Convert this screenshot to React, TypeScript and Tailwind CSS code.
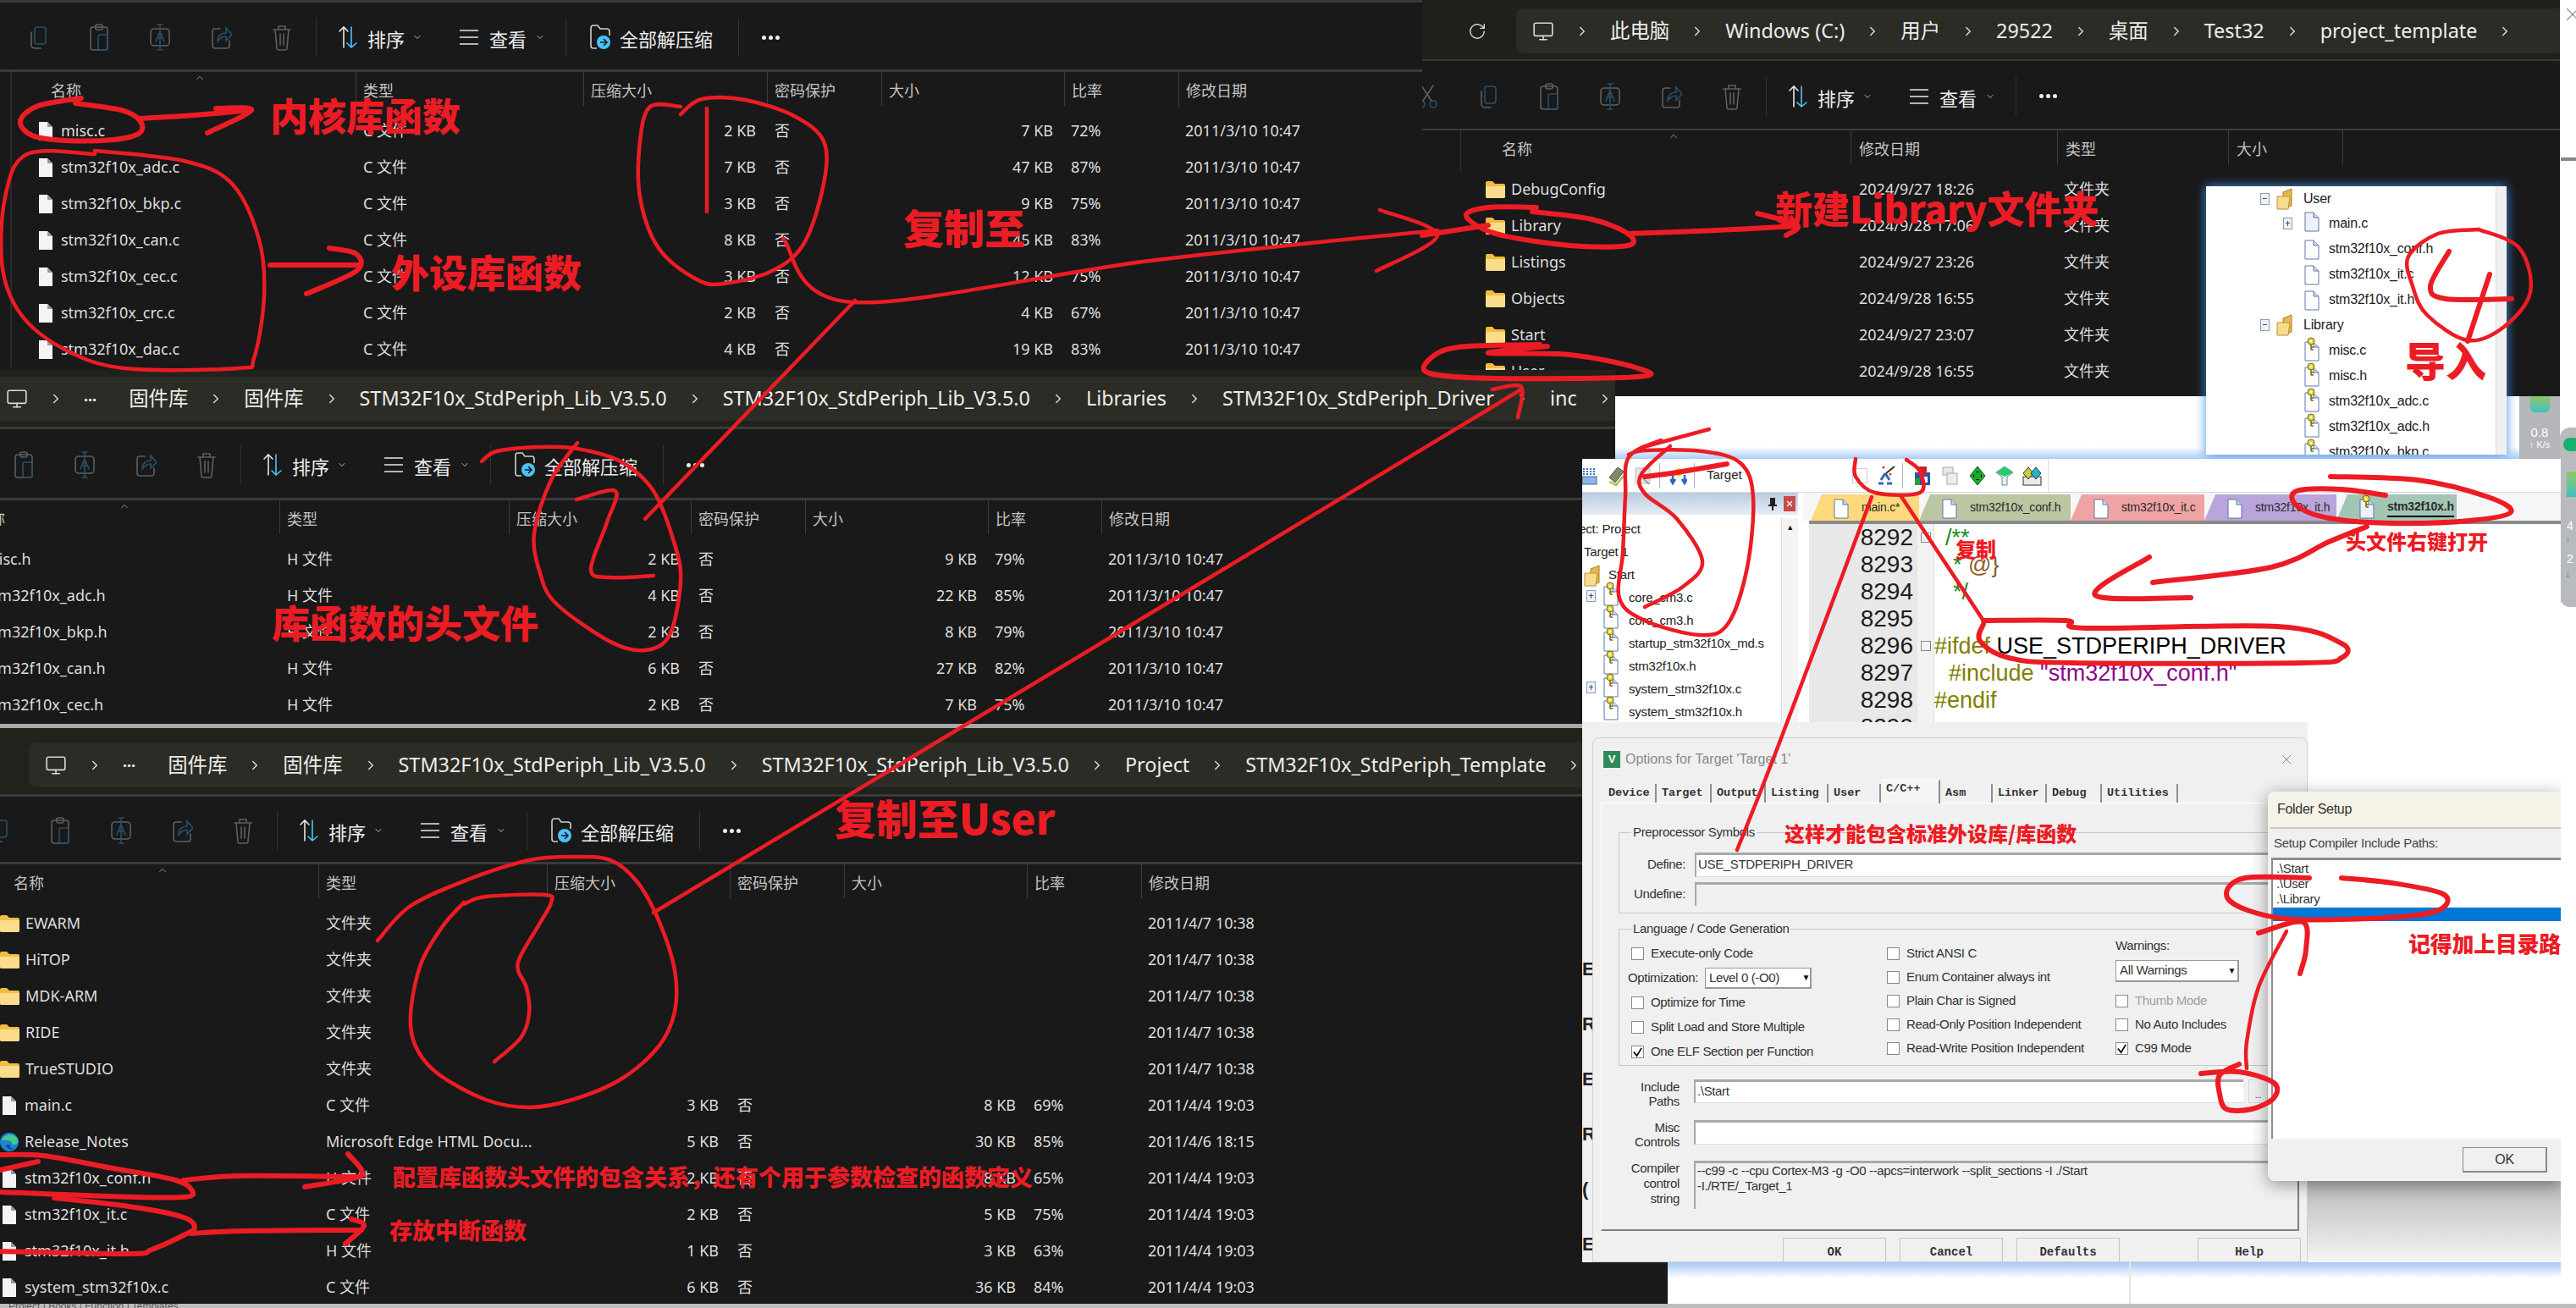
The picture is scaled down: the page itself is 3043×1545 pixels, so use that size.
import React from 'react';
import { ChevronDown, ChevronRight, ChevronUp, Monitor, RotateCw, X } from 'lucide-react';

const SANS = "font-['Noto_Sans','Noto_Sans_CJK_SC',sans-serif]";
const ARIAL = "font-['Liberation_Sans','Noto_Sans_CJK_SC',sans-serif]";
const MONO = "font-['Liberation_Mono',monospace]";
const NOTE = "font-['Noto_Sans_CJK_SC',sans-serif] font-black text-[#ec1c24] leading-none whitespace-nowrap absolute";

type Row = { name: string; icon: 'file' | 'folder' | 'edge'; type: string; zip?: string; pwd?: string; size?: string; ratio?: string; date: string };

const libC: Row[] = [
  ['misc.c', '2', '7', '72'],
  ['stm32f10x_adc.c', '7', '47', '87'],
  ['stm32f10x_bkp.c', '3', '9', '75'],
  ['stm32f10x_can.c', '8', '45', '83'],
  ['stm32f10x_cec.c', '3', '12', '75'],
  ['stm32f10x_crc.c', '2', '4', '67'],
  ['stm32f10x_dac.c', '4', '19', '83'],
].map(([name, z, s, r]) => ({ name, icon: 'file', type: 'C 文件', zip: `${z} KB`, pwd: '否', size: `${s} KB`, ratio: `${r}%`, date: '2011/3/10 10:47' }));

const libH: Row[] = [
  ['misc.h', '2', '9', '79'],
  ['stm32f10x_adc.h', '4', '22', '85'],
  ['stm32f10x_bkp.h', '2', '8', '79'],
  ['stm32f10x_can.h', '6', '27', '82'],
  ['stm32f10x_cec.h', '2', '7', '75'],
].map(([name, z, s, r]) => ({ name, icon: 'file', type: 'H 文件', zip: `${z} KB`, pwd: '否', size: `${s} KB`, ratio: `${r}%`, date: '2011/3/10 10:47' }));

const template: Row[] = [
  ...['EWARM', 'HiTOP', 'MDK-ARM', 'RIDE', 'TrueSTUDIO'].map((name): Row => ({ name, icon: 'folder', type: '文件夹', date: '2011/4/7 10:38' })),
  { name: 'main.c', icon: 'file', type: 'C 文件', zip: '3 KB', pwd: '否', size: '8 KB', ratio: '69%', date: '2011/4/4 19:03' },
  { name: 'Release_Notes', icon: 'edge', type: 'Microsoft Edge HTML Docu...', zip: '5 KB', pwd: '否', size: '30 KB', ratio: '85%', date: '2011/4/6 18:15' },
  { name: 'stm32f10x_conf.h', icon: 'file', type: 'H 文件', zip: '2 KB', pwd: '否', size: '8 KB', ratio: '65%', date: '2011/4/4 19:03' },
  { name: 'stm32f10x_it.c', icon: 'file', type: 'C 文件', zip: '2 KB', pwd: '否', size: '5 KB', ratio: '75%', date: '2011/4/4 19:03' },
  { name: 'stm32f10x_it.h', icon: 'file', type: 'H 文件', zip: '1 KB', pwd: '否', size: '3 KB', ratio: '63%', date: '2011/4/4 19:03' },
  { name: 'system_stm32f10x.c', icon: 'file', type: 'C 文件', zip: '6 KB', pwd: '否', size: '36 KB', ratio: '84%', date: '2011/4/4 19:03' },
];

const projectDirs = [
  ['DebugConfig', '2024/9/27 18:26'],
  ['Library', '2024/9/28 17:06'],
  ['Listings', '2024/9/27 23:26'],
  ['Objects', '2024/9/28 16:55'],
  ['Start', '2024/9/27 23:07'],
  ['User', '2024/9/28 16:55'],
];

function FileIcon() {
  return (
    <svg width="16" height="22" viewBox="0 0 16 22" className="shrink-0">
      <path d="M0 0h10l6 6v16H0z" fill="#f4f4f4" />
      <path d="M10 0v6h6z" fill="#9a9a9a" />
    </svg>
  );
}

function FolderIcon() {
  return (
    <svg width="23" height="20" viewBox="0 0 23 20" className="shrink-0">
      <path d="M0 2a2 2 0 0 1 2-2h6l3 3h10a2 2 0 0 1 2 2v13a2 2 0 0 1-2 2H2a2 2 0 0 1-2-2z" fill="#f0bd3f" />
      <path d="M0 6h23v12a2 2 0 0 1-2 2H2a2 2 0 0 1-2-2z" fill="#fbdc8a" />
    </svg>
  );
}

function EdgeIcon() {
  return (
    <svg width="22" height="22" viewBox="0 0 22 22" className="shrink-0">
      <circle cx="11" cy="11" r="11" fill="#1b83d4" />
      <path d="M2 9C4 2 14 0 19 5c3 3 3 8-1 9-3 1-5-1-4-3-4-3-9-2-12-2z" fill="#46c98c" />
      <path d="M7 14c0 4 5 7 10 5-5 0-6-3-5-5z" fill="#0d4d9b" />
    </svg>
  );
}

function Icon2({ children }: { children: React.ReactNode }) {
  return (
    <div className="flex h-[46px] w-[72px] items-center justify-center">
      <svg width="26" height="34" viewBox="0 0 26 34" fill="none" strokeWidth="1.6" strokeLinecap="round">
        {children}
      </svg>
    </div>
  );
}

function ActionIcons({ cut }: { cut?: boolean }) {
  const g = '#5f5f5f';
  const b = '#26506b';
  return (
    <>
      {cut && (
        <Icon2>
          <circle cx="6" cy="26" r="4" stroke={b} />
          <circle cx="20" cy="26" r="4" stroke={b} />
          <path d="M8 22 20 4M18 22 6 4" stroke={g} />
        </Icon2>
      )}
      <Icon2>
        <rect x="9" y="5" width="13" height="20" rx="3" stroke={b} />
        <path d="M5 11v15a4 4 0 0 0 4 4h7" stroke={g} />
      </Icon2>
      <Icon2>
        <rect x="3" y="5" width="20" height="27" rx="3" stroke={g} />
        <rect x="9" y="2" width="8" height="6" rx="2" stroke={g} />
        <rect x="12" y="14" width="11" height="18" rx="2" stroke={b} />
      </Icon2>
      <Icon2>
        <rect x="2" y="7" width="22" height="20" rx="4" stroke={g} />
        <path d="M13 2v30M10 2h6M10 32h6" stroke={b} />
        <path d="M8 22l5-12 5 12M10 18h6" stroke={b} />
      </Icon2>
      <Icon2>
        <path d="M12 7H6a3 3 0 0 0-3 3v17a3 3 0 0 0 3 3h14a3 3 0 0 0 3-3v-6" stroke={g} />
        <path d="M9 22c0-7 5-10 10-10V6l7 8-7 7v-5c-4 0-7 2-10 6z" stroke={b} />
      </Icon2>
      <Icon2>
        <path d="M3 8h20M9 8V4h8v4M5 8l2 22a2 2 0 0 0 2 2h8a2 2 0 0 0 2-2l2-22M11 13v13M15 13v13" stroke={g} />
      </Icon2>
    </>
  );
}

function Toolbar({ offset, zip, cut }: { offset: string; zip?: boolean; cut?: boolean }) {
  return (
    <div className={`flex h-full items-center text-[22px] text-[#ededed] ${SANS} ${offset}`}>
      <ActionIcons cut={cut} />
      <div className="ml-[4px] h-[46px] w-px bg-[#333333]" />
      <div className="ml-[26px] flex items-center">
        <svg width="22" height="30" viewBox="0 0 22 30" fill="none" strokeWidth="1.6" strokeLinecap="round">
          <path d="M6 27V3M1 8l5-5 5 5" stroke="#e6e6e6" />
          <path d="M15 3v24M10 22l5 5 6-5" stroke="#4cc2ff" />
        </svg>
        <span className="ml-[12px] mt-[5px] w-[45px]">排序</span>
        <ChevronDown size={12} className="ml-[8px] text-[#bdbdbd]" />
      </div>
      <div className="ml-[44px] flex items-center">
        <svg width="22" height="20" viewBox="0 0 22 20" stroke="#e6e6e6" strokeWidth="1.6">
          <path d="M0 2h22M0 10h22M0 18h22" />
        </svg>
        <span className="ml-[13px] mt-[5px] w-[45px]">查看</span>
        <ChevronDown size={12} className="ml-[9px] text-[#bdbdbd]" />
      </div>
      <div className="ml-[24px] h-[46px] w-px bg-[#333333]" />
      {zip && (
        <>
          <div className="ml-[28px] flex items-center">
            <svg width="25" height="32" viewBox="0 0 25 32" fill="none" strokeWidth="1.6">
              <path d="M8 29H4a3 3 0 0 1-3-3V5a3 3 0 0 1 3-3h5l3 4h8a3 3 0 0 1 3 3v5" stroke="#cfcfcf" />
              <circle cx="16" cy="22" r="8" fill="#4cc2ff" />
              <path d="M12 22h7M16 18l4 4-4 4" stroke="#191919" />
            </svg>
            <span className="ml-[10px] mt-[5px] w-[112px] whitespace-nowrap">全部解压缩</span>
          </div>
          <div className="ml-[28px] h-[46px] w-px bg-[#333333]" />
        </>
      )}
      <div className="ml-[27px] flex gap-[3px]">
        <span className="h-[5px] w-[5px] rounded-full bg-[#eeeeee]" />
        <span className="h-[5px] w-[5px] rounded-full bg-[#eeeeee]" />
        <span className="h-[5px] w-[5px] rounded-full bg-[#eeeeee]" />
      </div>
    </div>
  );
}

function Crumbs({ items, more }: { items: string[]; more?: boolean }) {
  return (
    <div className={`flex h-full items-center gap-[24px] whitespace-nowrap text-[23.4px] text-[#ececec] ${SANS}`}>
      <Monitor size={26} strokeWidth={1.5} className="shrink-0 text-[#d8d8d8]" />
      <ChevronRight size={18} className="shrink-0 text-[#d8d8d8]" />
      {more && <span className="mb-[8px] mr-[14px] text-[18px] font-bold">...</span>}
      {items.map((c, i) => (
        <React.Fragment key={i}>
          <span>{c}</span>
          <ChevronRight size={18} className="shrink-0 text-[#d8d8d8]" />
        </React.Fragment>
      ))}
    </div>
  );
}

function FileRows({ rows, grid, nameOffset }: { rows: Row[]; grid: string; nameOffset: string }) {
  return (
    <div className={`text-[18px] text-[#dedede] ${SANS}`}>
      {rows.map((r) => (
        <div key={r.name} className={`grid h-[43px] items-center ${grid}`}>
          <div className={`flex min-w-0 items-center gap-[10px] whitespace-nowrap ${nameOffset}`}>
            {r.icon === 'file' && <FileIcon />}
            {r.icon === 'folder' && <span className="ml-[-3px] mr-[-3px]"><FolderIcon /></span>}
            {r.icon === 'edge' && <span className="ml-[-3px] mr-[-3px]"><EdgeIcon /></span>}
            <span>{r.name}</span>
          </div>
          <div className="whitespace-nowrap pl-[9px]">{r.type}</div>
          <div className="pr-[13px] text-right">{r.zip}</div>
          <div className="pl-[9px]">{r.pwd}</div>
          <div className="pr-[13px] text-right">{r.size}</div>
          <div className="pl-[8px]">{r.ratio}</div>
          <div className="whitespace-nowrap pl-[8px]">{r.date}</div>
        </div>
      ))}
    </div>
  );
}

function HeaderRow({ grid, caret, first }: { grid: string; caret: string; first: string }) {
  const labels = ['类型', '压缩大小', '密码保护', '大小', '比率', '修改日期'];
  return (
    <div className={`relative grid h-[48px] text-[18px] text-[#c4c4c4] ${SANS} ${grid}`}>
      <ChevronUp size={14} strokeWidth={1.5} className={`absolute top-[0px] text-[#9a9a9a] ${caret}`} />
      <div className={`whitespace-nowrap pt-[9px] ${first}`}>名称</div>
      {labels.map((l) => (
        <div key={l} className="h-[40px] whitespace-nowrap border-l border-[#3d3d3d] pl-[8px] pt-[9px]">
          {l}
        </div>
      ))}
    </div>
  );
}

function Glyph({ children, w = 20 }: { children: React.ReactNode; w?: number }) {
  return (
    <svg width={w} height="26" viewBox={`0 0 ${w} 26`} className="shrink-0">
      {children}
    </svg>
  );
}

function PageIcon({ keyed, plain }: { keyed?: boolean; plain?: boolean }) {
  return (
    <span className="relative inline-block h-[26px] w-[20px] shrink-0">
      <svg width="18" height="24" viewBox="0 0 18 24" className="absolute left-[1px] top-[2px]">
        <path d="M1 1h10l6 6v16H1z" fill={plain ? '#ffffff' : '#eef1f8'} stroke="#5c76a8" />
        <path d="M11 1v6h6" fill="#cfd8ea" stroke="#5c76a8" />
      </svg>
      {keyed && (
        <svg width="12" height="16" viewBox="0 0 12 16" className="absolute left-[3px] top-[-3px]">
          <circle cx="6" cy="5" r="4" fill="#e8d63a" stroke="#6f6a10" />
          <circle cx="6" cy="5" r="1.3" fill="#ffffff" />
          <path d="M6 9v6M6 12h3M6 15h3" stroke="#6f6a10" strokeWidth="1.5" />
        </svg>
      )}
    </span>
  );
}

function YellowFolder() {
  return (
    <svg width="22" height="26" viewBox="0 0 22 26" className="shrink-0">
      <path d="M8 5l10-4v20L8 25z" fill="#e7b94d" stroke="#a98023" />
      <path d="M1 10h15l-2 15H1z" fill="#f8dc8e" stroke="#b98f30" />
    </svg>
  );
}

function TreeBox({ plus }: { plus?: boolean }) {
  return (
    <span className="relative inline-block h-[14px] w-[11px] shrink-0 border border-[#8d9bb3] bg-[#eef1f6]">
      <span className="absolute left-[2px] top-[5px] h-px w-[5px] bg-[#3f4f78]" />
      {plus && <span className="absolute left-[4px] top-[3px] h-[6px] w-px bg-[#3f4f78]" />}
    </span>
  );
}

function UserTree() {
  const fileRow = 'flex h-[30px] items-center pl-[115px]';
  return (
    <div className={`absolute left-[2606px] top-[220px] z-20 flex h-[317px] w-[355px] overflow-hidden bg-white text-[16px] tracking-[-0.2px] text-[#222222] shadow-[0_0_12px_#3f8ee8] ${ARIAL}`}>
      <div className="flex-1 pt-[0px]">
        <div className="flex h-[29px] items-center pl-[64px]">
          <TreeBox /><span className="ml-[8px]"><YellowFolder /></span><span className="ml-[10px]">User</span>
        </div>
        <div className="flex h-[30px] items-center pl-[91px]">
          <TreeBox plus /><span className="ml-[13px]"><PageIcon /></span><span className="ml-[10px]">main.c</span>
        </div>
        {['stm32f10x_conf.h', 'stm32f10x_it.c', 'stm32f10x_it.h'].map((n) => (
          <div key={n} className={fileRow}><PageIcon plain /><span className="ml-[10px]">{n}</span></div>
        ))}
        <div className="flex h-[30px] items-center pl-[64px]">
          <TreeBox /><span className="ml-[8px]"><YellowFolder /></span><span className="ml-[10px]">Library</span>
        </div>
        {['misc.c', 'misc.h', 'stm32f10x_adc.c', 'stm32f10x_adc.h', 'stm32f10x_bkp.c'].map((n) => (
          <div key={n} className={fileRow}><PageIcon keyed plain /><span className="ml-[10px]">{n}</span></div>
        ))}
      </div>
      <div className="w-[13px] border-l border-[#dddddd] bg-[#f0f0f0]" />
    </div>
  );
}

function KeilToolbar() {
  return (
    <div className="flex h-[40px] border-b border-[#d8d8d8] bg-white">
      <div className={`flex w-[551px] items-center border-r border-[#d8d8d8] text-[15px] text-[#222222] ${ARIAL}`}>
        <Glyph w={18}>
          <rect x="0" y="14" width="17" height="9" fill="#8fb6e8" stroke="#40689f" />
          <path d="M2 4v8M6 4v8M10 4v8M14 4v8" stroke="#3d74c2" strokeWidth="2" strokeDasharray="2 1" />
        </Glyph>
        <span className="ml-[12px]">
          <Glyph>
            <path d="M2 15 12 3l7 5-10 13z" fill="#7f8a6d" stroke="#50543f" />
            <path d="M2 20l8 4 9-11" fill="none" stroke="#a8c24b" strokeWidth="2.5" />
          </Glyph>
        </span>
        <span className="ml-[12px]">
          <Glyph>
            <rect x="1" y="4" width="17" height="18" fill="#e4e4e4" stroke="#bdbdbd" />
            <path d="M10 16l7 7" stroke="#a5a5a5" strokeWidth="2" />
          </Glyph>
        </span>
        <span className="ml-[9px] h-[30px] w-px bg-[#b5b5b5]" />
        <span className="ml-[12px]">
          <Glyph>
            <circle cx="10" cy="9" r="5" fill="#e5dc2e" />
            <path d="M3 12v8M0 17l3 5 3-5M17 12v8M14 17l3 5 3-5" stroke="#2d66c0" strokeWidth="2.5" fill="none" />
          </Glyph>
        </span>
        <span className="ml-[8px] h-[30px] w-px bg-[#b5b5b5]" />
        <span className="ml-[14px]">Target</span>
        <span className="ml-[130px] h-[18px] w-[18px] border border-[#cccccc]" />
        <span className="ml-[10px]">
          <Glyph w={23}>
            <path d="M3 22h6M13 22h6M11 10 6 18M11 10l5 8" stroke="#3268b8" strokeWidth="3" fill="none" />
            <path d="M12 10 22 2" stroke="#333333" strokeWidth="2" />
            <circle cx="17" cy="11" r="1.5" fill="#d33" />
            <circle cx="9" cy="3" r="1.5" fill="#d33" />
          </Glyph>
        </span>
        <span className="ml-[8px] h-[30px] w-px bg-[#b5b5b5]" />
        <span className="ml-[13px]">
          <Glyph>
            <rect x="1" y="9" width="18" height="15" fill="#2557a8" />
            <rect x="5" y="2" width="10" height="10" fill="#c6242a" />
            <rect x="9" y="14" width="7" height="7" fill="#ffffff" />
            <rect x="1" y="16" width="6" height="8" fill="#2d9a43" />
          </Glyph>
        </span>
        <span className="ml-[13px]">
          <Glyph>
            <rect x="1" y="3" width="12" height="9" fill="#e8e8e8" stroke="#a8a8a8" />
            <rect x="6" y="10" width="12" height="13" fill="#ededed" stroke="#a8a8a8" />
          </Glyph>
        </span>
        <span className="ml-[12px]">
          <Glyph>
            <path d="M10 2l9 11-9 11L1 13z" fill="#19a82f" stroke="#0a5a17" />
            <path d="M10 8v1M10 17v1M5 13h1M14 13h1" stroke="#000000" strokeWidth="3" />
          </Glyph>
        </span>
        <span className="ml-[11px]">
          <Glyph w={22}>
            <path d="M1 9 11 2l10 7-7 5v10h-6V14z" fill="#dfeff5" stroke="#6a8a92" />
            <path d="M1 9 11 2l10 7-10 5z" fill="#2fc86b" />
          </Glyph>
        </span>
        <span className="ml-[10px]">
          <Glyph w={23}>
            <rect x="1" y="14" width="21" height="10" fill="#e9e9e9" stroke="#333333" />
            <path d="M7 3l6 7-6 7-6-7z" fill="#c8cf34" stroke="#333333" />
            <path d="M16 3l6 7-6 7-6-7z" fill="#22b6c8" stroke="#333333" />
          </Glyph>
        </span>
      </div>
    </div>
  );
}

function ProjectPane() {
  const files: [string, boolean][] = [
    ['core_cm3.c', true],
    ['core_cm3.h', false],
    ['startup_stm32f10x_md.s', false],
    ['stm32f10x.h', false],
    ['system_stm32f10x.c', true],
    ['system_stm32f10x.h', false],
  ];
  return (
    <div className={`flex w-[255px] shrink-0 flex-col bg-white text-[15px] tracking-[-0.2px] text-[#222222] ${ARIAL}`}>
      <div className="flex h-[26px] shrink-0 items-center justify-end gap-[8px] bg-gradient-to-b from-[#b9cce0] to-[#e6edf5] pr-[3px]">
        <svg width="10" height="16" viewBox="0 0 10 16">
          <path d="M2 1h6v8h2v2H6v5H4v-5H0V9h2z" fill="#222222" />
        </svg>
        <span className="flex h-[18px] w-[14px] items-center justify-center bg-[#c84a4a]"><X size={10} strokeWidth={3} className="text-white" /></span>
      </div>
      <div className="flex min-h-0 flex-1 pt-[4px]">
        <div className="min-w-0 flex-1 overflow-hidden">
          <div className="ml-[-7px] flex h-[27px] items-center whitespace-nowrap">ject: Project</div>
          <div className="ml-[2px] flex h-[27px] items-center whitespace-nowrap">Target 1</div>
          <div className="ml-[2px] flex h-[27px] items-center whitespace-nowrap">
            <YellowFolder /><span className="ml-[7px]">Start</span>
          </div>
          {files.map(([n, plus]) => (
            <div key={n} className="flex h-[27px] items-center whitespace-nowrap">
              <span className={`ml-[5px] w-[11px] ${plus ? '' : 'invisible'}`}><TreeBox plus /></span>
              <span className="ml-[8px]"><PageIcon keyed plain /></span>
              <span className="ml-[11px]">{n}</span>
            </div>
          ))}
        </div>
        <div className="flex w-[20px] flex-col items-center border-l border-[#dcdcdc] bg-[#f3f3f3] text-[9px] leading-[22px] text-[#111111]">▲</div>
      </div>
    </div>
  );
}

function EditorTabs() {
  const tabs = [
    { n: 'main.c*', w: 'w-[128px]', bg: 'bg-[#ffd97e]' },
    { n: 'stm32f10x_conf.h', w: 'w-[179px]', bg: 'bg-[#bac7a2]' },
    { n: 'stm32f10x_it.c', w: 'w-[158px]', bg: 'bg-[#efa4a4]' },
    { n: 'stm32f10x_it.h', w: 'w-[156px]', bg: 'bg-[#baa4dc]' },
    { n: 'stm32f10x.h', w: 'w-[142px]', bg: 'bg-[#a2c5b6]', active: true },
  ];
  return (
    <div className={`flex h-[33px] shrink-0 items-end bg-[#f6f6f6] pl-[9px] text-[14px] tracking-[-0.2px] text-[#2b2b2b] ${ARIAL}`}>
      {tabs.map((t) => (
        <div key={t.n} className={`flex h-[31px] items-center pl-[26px] [clip-path:polygon(13px_0,100%_0,100%_100%,0_100%)] ${t.w} ${t.bg}`}>
          <PageIcon plain={!t.active} keyed={t.active} />
          <span className={`ml-[14px] whitespace-nowrap ${t.active ? 'border-b-2 border-black font-bold' : ''}`}>{t.n}</span>
        </div>
      ))}
    </div>
  );
}

function CodeArea() {
  const lines: [string, React.ReactNode][] = [
    ['8292', <span className="ml-[13px] text-[#1a8a2c]">/**</span>],
    ['8293', <span className="ml-[22px] text-[#8b5a2b]"><span className="text-[#1a8a2c]">*</span> @{'}'}</span>],
    ['8294', <span className="ml-[22px] text-[#1a8a2c]">*/</span>],
    ['8295', null],
    ['8296', <span><span className="text-[#808000]">#ifdef</span> <span className="text-black">USE_STDPERIPH_DRIVER</span></span>],
    ['8297', <span className="ml-[17px]"><span className="text-[#808000]">#include</span> <span className="text-[#8b0a8b]">"stm32f10x_conf.h"</span></span>],
    ['8298', <span className="text-[#808000]">#endif</span>],
    ['8299', null],
  ];
  return (
    <div className={`ml-[7px] flex-1 overflow-hidden border-t-[4px] border-[#8a8a8a] bg-white text-[27px] leading-[32px] ${ARIAL}`}>
      {lines.map(([num, code], i) => (
        <div key={num} className="flex h-[32px] items-center whitespace-nowrap">
          <div className="w-[128px] shrink-0 bg-[#e8e8e8] pr-[5px] text-right text-[28px] text-[#1c1c1c]">{num}</div>
          <div className="flex w-[20px] shrink-0 justify-center self-stretch border-r border-[#dddddd] bg-[#f2f2f2] pt-[10px]">
            {(i === 0 || i === 4) && <span className="h-[12px] w-[12px] border border-[#888888]" />}
          </div>
          {code}
        </div>
      ))}
    </div>
  );
}

function Check({ label, checked, disabled, row }: { label: string; checked?: boolean; disabled?: boolean; row: string }) {
  return (
    <div className={`flex items-center whitespace-nowrap ${row}`}>
      <span className="relative h-[15px] w-[15px] shrink-0 border border-[#8a8a8a] bg-white">
        {checked && (
          <svg viewBox="0 0 14 14" className="absolute inset-0">
            <path d="M2 7l4 5 6-10" fill="none" stroke="#111111" strokeWidth="2" />
          </svg>
        )}
      </span>
      <span className={`ml-[8px] ${disabled ? 'text-[#a0a0a0]' : ''}`}>{label}</span>
    </div>
  );
}

function OptionsDialog() {
  const tabs = [
    ['Device', 'w-[63px]'],
    ['Target', 'w-[65px]'],
    ['Output', 'w-[64px]'],
    ['Listing', 'w-[74px]'],
    ['User', 'w-[62px]'],
    ['C/C++', 'w-[70px]'],
    ['Asm', 'w-[62px]'],
    ['Linker', 'w-[64px]'],
    ['Debug', 'w-[65px]'],
    ['Utilities', 'w-[90px]'],
  ];
  const inset = 'border-t-[3px] border-l-2 border-b border-[#a8a8a8] border-b-[#dddddd] bg-white';
  return (
    <div className={`absolute left-[12px] top-[329px] h-[620px] w-[845px] rounded-t-[8px] border border-[#cfcfcf] bg-[#f0f0f0] text-[15px] tracking-[-0.35px] text-[#333333] ${ARIAL}`}>
      <div className="flex h-[49px] items-center pl-[12px] pr-[14px]">
        <span className="flex h-[20px] w-[20px] items-center justify-center bg-[#2e8b57] text-[13px] font-bold leading-none text-white">V</span>
        <span className="ml-[6px] flex-1 text-[16px] tracking-normal text-[#8a8a8a]">Options for Target 'Target 1'</span>
        <X size={20} strokeWidth={1} className="text-[#777777]" />
      </div>
      <div className={`flex h-[27px] items-end pl-[12px] text-[13.5px] font-bold tracking-normal text-[#333333] ${MONO}`}>
        {tabs.map(([t, w]) => (
          <div key={t} className={`flex h-[22px] items-center border-r-2 border-[#8f8f8f] pl-[6px] ${w} ${t === 'C/C++' ? 'mb-[-1px] h-[28px] items-start border-t border-t-white bg-[#f5f5f5]' : ''}`}>
            {t}
          </div>
        ))}
      </div>
      <div className="mx-[9px] h-[506px] border-b-2 border-r-2 border-t border-l border-white border-b-[#808080] border-r-[#808080] pt-[34px]">
        {/* preprocessor group */}
        <div className="relative ml-[20px] h-[96px] w-[794px] border-l border-t border-b border-[#c8c8c8] pt-[23px]">
          <span className="absolute left-[14px] top-[-11px] bg-[#f0f0f0] px-[2px] leading-[20px]">Preprocessor Symbols</span>
          <div className="flex items-center">
            <span className="w-[78px] text-right">Define:</span>
            <div className={`ml-[11px] h-[29px] flex-1 pl-[2px] text-[15px] leading-[22px] ${inset}`}>USE_STDPERIPH_DRIVER</div>
          </div>
          <div className="mt-[6px] flex items-center">
            <span className="w-[78px] text-right">Undefine:</span>
            <div className="ml-[11px] h-[28px] flex-1 border-l-2 border-t-[3px] border-[#a8a8a8] bg-[#f0f0f0]" />
          </div>
        </div>
        {/* code generation group */}
        <div className="relative ml-[20px] mt-[18px] flex h-[162px] w-[794px] border-l border-t border-b border-[#c8c8c8] pl-[14px] pt-[14px]">
          <span className="absolute left-[14px] top-[-11px] bg-[#f0f0f0] px-[2px] leading-[20px]">Language / Code Generation</span>
          <div className="w-[302px]">
            <Check row="h-[29px]" label="Execute-only Code" />
            <div className="ml-[-4px] flex h-[29px] items-center">
              <span>Optimization:</span>
              <div className="ml-[8px] flex h-[25px] w-[126px] items-center justify-between border-b-2 border-l border-r-2 border-t border-[#9a9a9a] bg-white pl-[4px]">
                Level 0 (-O0)
                <span className="text-[10px] leading-none text-[#111111]">▼</span>
              </div>
            </div>
            <Check row="h-[29px]" label="Optimize for Time" />
            <Check row="h-[29px]" label="Split Load and Store Multiple" />
            <Check row="h-[29px]" label="One ELF Section per Function" checked />
          </div>
          <div className="w-[270px]">
            <Check row="h-[28px]" label="Strict ANSI C" />
            <Check row="h-[28px]" label="Enum Container always int" />
            <Check row="h-[28px]" label="Plain Char is Signed" />
            <Check row="h-[28px]" label="Read-Only Position Independent" />
            <Check row="h-[28px]" label="Read-Write Position Independent" />
          </div>
          <div className="mt-[-6px] w-[146px]">
            <div className="h-[22px] leading-[22px]">Warnings:</div>
            <div className="mb-[8px] mt-[6px] flex h-[26px] items-center justify-between border-b-2 border-l border-r-2 border-t border-[#9a9a9a] bg-white pl-[4px]">
              All Warnings
              <span className="mr-[2px] text-[10px] leading-none text-[#111111]">▼</span>
            </div>
            <Check row="h-[28px]" label="Thumb Mode" disabled />
            <Check row="h-[28px]" label="No Auto Includes" />
            <Check row="h-[28px]" label="C99 Mode" checked />
          </div>
        </div>
        {/* paths */}
        <div className="mt-[16px] flex">
          <div className="w-[92px] text-right leading-[17px]">Include<br />Paths</div>
          <div className={`ml-[17px] h-[28px] w-[649px] pl-[2px] leading-[22px] ${inset}`}>.\Start</div>
          <div className="ml-[6px] flex h-[28px] w-[23px] items-end justify-center border border-[#d5d5d5] text-[10px] leading-[16px]">...</div>
        </div>
        <div className="mt-[14px] flex">
          <div className="w-[92px] text-right leading-[17px]">Misc<br />Controls</div>
          <div className={`ml-[17px] h-[29px] flex-1 ${inset}`} />
        </div>
        <div className="mt-[14px] flex">
          <div className="w-[92px] text-right leading-[18px]">Compiler<br />control<br />string</div>
          <div className="ml-[17px] h-[57px] w-[678px] border-l-2 border-t-[3px] border-[#a8a8a8] bg-[#f0f0f0] pl-[2px] leading-[18px]">
            --c99 -c --cpu Cortex-M3 -g -O0 --apcs=interwork --split_sections -I ./Start<br />-I./RTE/_Target_1
          </div>
        </div>
      </div>
      <div className={`ml-[224px] mt-[8px] flex gap-[16px] text-[14px] font-bold tracking-normal ${MONO}`}>
        <div className="flex h-[36px] w-[122px] justify-center border-l border-r border-t border-[#c4c4c4] pt-[6px]">OK</div>
        <div className="flex h-[36px] w-[122px] justify-center border-l border-r border-t border-[#c4c4c4] pt-[6px]">Cancel</div>
        <div className="flex h-[36px] w-[122px] justify-center border-l border-r border-t border-[#c4c4c4] pt-[6px]">Defaults</div>
        <div className="ml-[76px] flex h-[36px] w-[122px] justify-center border-l border-r border-t border-[#c4c4c4] pt-[6px]">Help</div>
      </div>
    </div>
  );
}

function FolderDialog() {
  return (
    <div className={`absolute left-[810px] top-[393px] h-[460px] w-[346px] overflow-hidden rounded-l-[8px] bg-[#f0f0f0] text-[15px] tracking-[-0.3px] text-[#333333] shadow-[0_4px_20px_rgba(0,0,0,0.4)] ${ARIAL}`}>
      <div className="flex h-[42px] items-center bg-[#f5f2e7] pl-[11px] text-[16px]">Folder Setup</div>
      <div className="ml-[3px] flex h-[36px] items-center border-t-2 border-[#c8c8c8] pl-[4px] text-[15px] text-[#444444]">Setup Compiler Include Paths:</div>
      <div className="relative ml-[4px] h-[332px] border-l-2 border-t-[3px] border-[#8d8d8d] bg-white pt-[1px]">
        <div className="h-[18px] pl-[4px] leading-[18px]">.\Start</div>
        <div className="h-[18px] pl-[4px] leading-[18px]">.\User</div>
        <div className="h-[18px] pl-[4px] leading-[18px]">.\Library</div>
        <div className="mt-[1px] h-[16px] bg-[#0078d7]" />
        <span className={`${NOTE} left-[160px] top-[85px] text-[26px]`}>记得加上目录路径</span>
      </div>
      <div className="ml-[230px] mt-[10px] flex h-[30px] w-[100px] items-center justify-center border-b-2 border-l border-r-2 border-t border-[#8a8a8a] text-[16px]">OK</div>
    </div>
  );
}

function KeilWindow() {
  return (
    <div className="absolute left-[1869px] top-[542px] z-30 h-[949px] w-[1156px] overflow-hidden bg-[#f0f0f0]">
      <KeilToolbar />
      <div className="flex h-[271px] bg-white">
        <ProjectPane />
        <div className="ml-[6px] flex min-w-0 flex-1 flex-col">
          <EditorTabs />
          <CodeArea />
        </div>
      </div>
      <div className="absolute left-[857px] top-[311px] h-[82px] w-[299px] bg-white" />
      <div className="absolute left-[857px] top-[853px] h-[96px] w-[299px] bg-gradient-to-b from-[#b9b9b9] to-[#f6f6f6]" />
      <div className={`absolute left-0 top-[570px] w-[14px] overflow-hidden text-[22px] font-bold leading-[65px] text-[#222222] ${ARIAL}`}>
        <div>E</div><div>R</div><div>E</div><div>R</div><div>(</div><div>E</div>
      </div>
      <OptionsDialog />
      <FolderDialog />
    </div>
  );
}

function smooth(p: number[][]) {
  let d = `M${p[0][0]} ${p[0][1]}`;
  for (let i = 0; i < p.length - 1; i++) {
    const a = p[i - 1] ?? p[i];
    const b = p[i];
    const c = p[i + 1];
    const e = p[i + 2] ?? c;
    d += ` C${b[0] + (c[0] - a[0]) / 6} ${b[1] + (c[1] - a[1]) / 6} ${c[0] - (e[0] - b[0]) / 6} ${c[1] - (e[1] - b[1]) / 6} ${c[0]} ${c[1]}`;
  }
  return d;
}

const thick: number[][][] = [
  [[96,116],[45,125],[24,143],[38,160],[77,166],[134,165],[165,157],[165,142],[143,130],[89,122]],
  [[165,140],[230,136],[297,130]],
  [[255,128],[297,130],[245,157]],
  [[319,313],[424,313]],
  [[389,293],[421,300],[421,320],[362,347]],
  [[1680,278],[1758,266]],
  [[0,1364],[51,1365],[128,1379],[204,1393],[226,1405],[217,1414],[128,1413],[0,1408]],
  [[45,1372],[0,1382]],
  [[217,1394],[281,1389],[421,1390]],
  [[411,1363],[427,1382],[421,1391],[360,1402]],
  [[64,1415],[159,1426],[217,1438],[230,1450],[217,1459],[179,1476],[153,1481],[0,1478]],
  [[226,1457],[287,1454],[427,1453]],
  [[415,1440],[430,1448],[408,1469]],
  [[1815,245],[1758,245],[1732,255],[1767,276],[1854,290],[1923,290],[1923,276],[1880,259],[1810,250]],
  [[1923,276],[2028,272],[2123,267]],
  [[2076,252],[2123,266],[2110,278]],
  [[1828,409],[1758,417],[1854,419],[1932,434],[1936,445],[1767,447],[1689,441],[1689,424],[1723,410],[1819,407]],
  [[2040,548],[1981,558],[1943,563]],
  [[2818,585],[2766,578],[2713,580],[2713,597],[2751,612],[2826,618],[2917,615],[2966,605],[2939,587],[2856,567],[2753,563]],
  [[2796,622],[2751,640],[2683,670],[2543,688]],
  [[2539,658],[2475,703],[2588,706]],
  [[2343,733],[2441,733],[2464,742],[2690,740],[2766,760],[2766,777],[2720,783],[2449,783],[2373,777],[2339,757],[2343,737]],
  [[2728,1037],[2652,1037],[2630,1056],[2652,1074],[2713,1086],[2834,1083],[2883,1074],[2886,1056],[2826,1043],[2766,1037]],
  [[2668,1102],[2720,1089],[2724,1122],[2717,1150]],
  [[2600,1268],[2645,1266],[2686,1279],[2686,1297],[2660,1310],[2630,1310],[2622,1292],[2622,1270],[2645,1257]],
  [[2893,297],[2871,338],[2889,353],[2967,353]],
  [[2941,324],[2915,403]],
];

const thin: number[][][] = [
  [[112,182],[32,182],[6,233],[3,317],[26,373],[77,413],[147,435],[281,435],[300,423],[312,350],[306,283],[274,217],[217,190],[112,178]],
  [[804,126],[768,126],[756,167],[756,233],[778,293],[823,330],[855,335],[912,320],[950,287],[973,217],[973,167],[938,137],[880,118],[829,117],[804,135]],
  [[835,128],[835,250]],
  [[925,282],[1007,357],[1358,308],[1698,272]],
  [[1630,248],[1698,278],[1626,320]],
  [[762,613],[1010,355]],
  [[569,545],[587,533],[638,528],[682,530],[733,545],[772,580],[797,643],[804,687],[791,750],[762,768],[721,758],[657,713],[638,677],[631,630],[651,567],[682,523]],
  [[681,590],[727,580],[717,617],[698,673],[721,682],[772,680]],
  [[446,1111],[485,1070],[555,1038],[625,1016],[676,1012],[721,1016],[753,1042],[778,1087],[797,1146],[797,1195],[778,1236],[733,1275],[676,1299],[625,1308],[574,1299],[517,1268],[491,1236],[485,1198],[497,1139],[523,1094],[548,1066]],
  [[548,1068],[574,1059],[644,1057],[651,1066],[638,1090],[615,1129],[612,1146],[622,1167],[625,1198],[615,1226],[584,1254]],
  [[772,1078],[1300,760],[1797,460]],
  [[1793,493],[1797,457],[1763,460]],
  [[2019,507],[1941,528]],
  [[1962,520],[1924,540],[1920,587],[1917,653],[1913,707],[1943,733],[2007,750],[2041,737],[2064,670],[2071,587],[2056,547],[2011,533],[1943,532],[1924,537]],
  [[1973,527],[1939,560],[1943,583],[1981,613],[2011,663],[1988,693],[1943,717]],
  [[2192,542],[2192,563],[2215,582],[2268,582],[2268,557],[2252,543]],
  [[2245,585],[2290,653],[2343,733]],
  [[2211,587],[2101,880],[2052,1004]],
  [[2654,1262],[2654,1231],[2668,1166],[2701,1100]],
  [[2928,271],[2880,276],[2845,303],[2850,338],[2867,372],[2915,402],[2958,386],[2989,345],[2976,293],[2928,271]],
];

function Scribbles() {
  return (
    <svg className="pointer-events-none absolute left-0 top-0 z-40" width="3043" height="1545" fill="none" stroke="#ec1c24" strokeLinecap="round" strokeLinejoin="round">
      {thick.map((s, i) => <path key={i} d={smooth(s)} strokeWidth="6" />)}
      {thin.map((s, i) => <path key={i} d={smooth(s)} strokeWidth="4.5" />)}
    </svg>
  );
}

function Notes() {
  return (
    <div className="z-50">
      <span className={`${NOTE} left-[319px] top-[113px] z-50 text-[45px]`}>内核库函数</span>
      <span className={`${NOTE} left-[462px] top-[298px] z-50 text-[45px]`}>外设库函数</span>
      <span className={`${NOTE} left-[1067px] top-[243px] z-50 text-[48px]`}>复制至</span>
      <span className={`${NOTE} left-[321px] top-[712px] z-50 text-[45px]`}>库函数的头文件</span>
      <span className={`${NOTE} left-[986px] top-[940px] z-50 text-[49px]`}>复制至User</span>
      <span className={`${NOTE} left-[464px] top-[1376px] z-50 text-[27px]`}>配置库函数头文件的包含关系，还有个用于参数检查的函数定义</span>
      <span className={`${NOTE} left-[460px] top-[1439px] z-50 text-[27px]`}>存放中断函数</span>
      <span className={`${NOTE} left-[2097px] top-[223px] z-50 text-[44px]`}>新建Library文件夹</span>
      <span className={`${NOTE} left-[2841px] top-[400px] z-50 text-[48px]`}>导入</span>
      <span className={`${NOTE} left-[2771px] top-[627px] z-50 text-[24px]`}>头文件右键打开</span>
      <span className={`${NOTE} left-[2310px] top-[636px] z-50 text-[24px]`}>复制</span>
      <span className={`${NOTE} left-[2108px] top-[972px] z-50 text-[24px]`}>这样才能包含标准外设库/库函数</span>
    </div>
  );
}

export default function App() {
  const grid1 = 'grid-cols-[420px_269px_217px_135px_216px_135px_1fr]';
  const grid2 = 'grid-cols-[330px_271px_215px_135px_216px_134px_1fr]';
  const grid3 = 'grid-cols-[376px_270px_216px_135px_216px_135px_1fr]';
  return (
    <div className="relative h-[1545px] w-[3043px] overflow-hidden bg-white">
      {/* lib source window, top left */}
      <div className="absolute left-0 top-0 h-[437px] w-[1680px] overflow-hidden border-t-[3px] border-[#3a3a3a] bg-[#191919]">
        <div className="h-[82px] border-b-[3px] border-[#3a3a3a] pt-[3px]">
          <Toolbar offset="ml-[9px]" zip />
        </div>
        <div className="ml-[12px] border-l-2 border-[#2a2a2a] pl-0">
          <div className="ml-[-14px]">
            <HeaderRow grid={grid1} caret="left-[229px]" first="pl-[60px]" />
            <FileRows rows={libC} grid={grid1} nameOffset="ml-[46px]" />
          </div>
        </div>
      </div>

      {/* project folder, top right */}
      <div className="absolute left-[1680px] top-0 h-[468px] w-[1344px] overflow-hidden bg-[#191919]">
        <div className="flex h-[70px] items-center bg-[#1f1f1b] pt-[3px] text-[#dddddd]">
          <RotateCw size={22} strokeWidth={1.5} className="ml-[54px]" />
          <div className="ml-[35px] h-[53px] flex-1 rounded-l-[8px] bg-[#2c2c26] pl-[19px]">
            <Crumbs items={['此电脑', 'Windows (C:)', '用户', '29522', '桌面', 'Test32', 'project_template']} />
          </div>
        </div>
        <div className="h-[84px] overflow-hidden border-y-[2px] border-[#3a3a3a] pt-[3px]">
          <Toolbar offset="ml-[-30px]" cut />
        </div>
        <div className={`grid h-[48px] grid-cols-[506px_244px_202px_135px_135px] text-[18px] text-[#c4c4c4] ${SANS}`}>
          <div className="relative ml-[45px] h-full border-l border-[#333333] pl-[48px] pt-[9px]">
            名称
            <ChevronUp size={14} strokeWidth={1.5} className="absolute left-[244px] top-0 text-[#9a9a9a]" />
          </div>
          {['修改日期', '类型', '大小'].map((l) => (
            <div key={l} className="h-[40px] border-l border-[#3d3d3d] pl-[9px] pt-[9px]">{l}</div>
          ))}
          <div className="h-[40px] border-l border-[#3d3d3d]" />
        </div>
        <div className={`text-[18px] text-[#dedede] ${SANS}`}>
          {projectDirs.map(([n, d]) => (
            <div key={n} className="grid h-[43px] grid-cols-[506px_244px_202px] items-center">
              <div className="flex items-center gap-[7px] pl-[75px]"><FolderIcon />{n}</div>
              <div className="pl-[10px]">{d}</div>
              <div className="pl-[8px]">文件夹</div>
            </div>
          ))}
        </div>
      </div>

      <UserTree />

      {/* glow above the Keil window */}
      <div className="absolute left-[1869px] top-[528px] z-10 h-[14px] w-[1156px] bg-gradient-to-b from-white to-[#a9cdf6]" />
      {/* network meter widget */}
      <div className={`absolute left-[2976px] top-[468px] z-10 flex h-[74px] w-[48px] flex-col items-center bg-[#b5b6b9] text-white ${ARIAL}`}>
        <span className="h-[19px] w-[23px] rounded-b-[6px] bg-gradient-to-b from-[#8ec55e] to-[#33c3c0]" />
        <span className="mt-[16px] text-[15px] leading-none">0.8</span>
        <span className="text-[11px] leading-[14px]">↑ K/s</span>
      </div>
      <div className={`absolute left-[3024px] top-[505px] z-10 h-[212px] w-[19px] rounded-l-[12px] bg-[#b9babd] text-[14px] text-white ${ARIAL}`}>
        <div className="ml-[4px] mt-[12px] h-[16px] w-[20px] rounded-full bg-[#18b06a]" />
        <div className="ml-[8px] mt-[24px] h-[30px] w-[12px] bg-gradient-to-b from-[#8ec55e] to-[#33c3c0]" />
        <div className="ml-[8px] mt-[24px]">4</div>
        <div className="ml-[6px] text-[12px] leading-[14px] text-[#12a0f0]">↑</div>
        <div className="ml-[8px] mt-[4px]">2</div>
        <div className="ml-[6px] text-[12px] leading-[14px] text-[#12b060]">↓</div>
      </div>
      <X size={26} strokeWidth={1} className="absolute left-[3026px] top-[4px] text-[#8a8a8a]" />
      <div className="absolute left-[3025px] top-[186px] h-[4px] w-[18px] bg-[#7f8a88]" />

      {/* headers window, middle left */}
      <div className="absolute left-0 top-[437px] z-20 h-[418px] w-[1908px] overflow-hidden bg-[#191919]">
        <div className="h-[70px] border-b-[3px] border-[#3a3a3a] bg-[#22221d] pt-[8px]">
          <div className="h-[52px] bg-[#2c2c26] pl-[7px]">
            <Crumbs more items={['固件库', '固件库', 'STM32F10x_StdPeriph_Lib_V3.5.0', 'STM32F10x_StdPeriph_Lib_V3.5.0', 'Libraries', 'STM32F10x_StdPeriph_Driver', 'inc']} />
          </div>
        </div>
        <div className="h-[84px] border-b-[3px] border-[#3a3a3a] pt-[3px]">
          <Toolbar offset="ml-[-80px]" zip />
        </div>
        <HeaderRow grid={grid2} caret="left-[140px]" first="ml-[-30px]" />
        <FileRows rows={libH} grid={grid2} nameOffset="ml-[-44px]" />
      </div>
      <div className="absolute left-0 top-[855px] z-20 h-[5px] w-[1869px] bg-[#a9a9a9]" />

      {/* firmware template window, bottom left */}
      <div className="absolute left-0 top-[860px] z-20 h-[685px] w-[1970px] overflow-hidden bg-[#191919]">
        <div className="h-[81px] border-b-[3px] border-[#3a3a3a] bg-[#22221d] pt-[17px]">
          <div className="ml-[34px] h-[53px] rounded-l-[8px] bg-[#2c2c26] pl-[19px]">
            <Crumbs more items={['固件库', '固件库', 'STM32F10x_StdPeriph_Lib_V3.5.0', 'STM32F10x_StdPeriph_Lib_V3.5.0', 'Project', 'STM32F10x_StdPeriph_Template']} />
          </div>
        </div>
        <div className="h-[80px] border-b-[3px] border-[#3a3a3a] pt-[3px]">
          <Toolbar offset="ml-[-37px]" zip />
        </div>
        <HeaderRow grid={grid3} caret="left-[185px]" first="pl-[16px]" />
        <FileRows rows={template} grid={grid3} nameOffset="ml-[3px]" />
      </div>

      {/* white panes under the Keil window */}
      <div className="absolute left-[1970px] top-[1491px] z-20 flex h-[54px] w-[1055px] bg-white">
        <div className="h-full w-[547px] border-r-2 border-[#e4e4e4] bg-gradient-to-b from-[#a8c8f5] via-white via-[35%] to-white" />
        <div className="h-full flex-1 bg-gradient-to-b from-[#a8c8f5] via-white via-[35%] to-white" />
      </div>
      <div className={`absolute bottom-0 left-0 z-20 flex h-[5px] w-[3043px] items-center overflow-hidden bg-[#bdbdbd] pl-[10px] text-[12px] text-[#555555] ${ARIAL}`}>
        Project | Books | Function | Templates
      </div>

      <KeilWindow />
      <Scribbles />
      <Notes />
    </div>
  );
}
